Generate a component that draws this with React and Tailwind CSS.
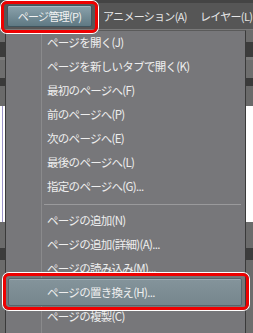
const groupA = [
  'ページを開く(J)',
  'ページを新しいタブで開く(K)',
  '最初のページへ(F)',
  '前のページへ(P)',
  '次のページへ(E)',
  '最後のページへ(L)',
  '指定のページへ(G)...',
];

const groupB = [
  'ページの追加(N)',
  'ページの追加(詳細)(A)...',
  'ページの読み込み(M)...',
  'ページの置き換え(H)...',
  'ページの複製(C)',
];

function MenuRow({ label, active }) {
  return (
    <div className="relative h-[24px] flex items-center">
      {active && (
        <div className="absolute left-[2px] right-[3px] top-[-3px] bottom-[-1px] rounded-[2px] border border-[#56666d] bg-gradient-to-b from-[#84949b] to-[#76868d] shadow-[inset_0_1px_0_#9aa9b0]" />
      )}
      <span className="relative pl-[41px] text-[11.5px] tracking-[-0.7px] text-[#eeeeee] whitespace-nowrap">
        {label}
      </span>
    </div>
  );
}

export default function App() {
  return (
    <div
      className="relative w-[253px] h-[333px] overflow-hidden bg-[#6d6d6d]"
      style={{ fontFamily: '"Noto Sans CJK JP", "Noto Sans", sans-serif' }}
    >
      {/* menu bar */}
      <div className="h-[30px] flex items-center bg-[#565656] border-t-[3px] border-[#444444] border-b border-b-[#7a7a7a] text-[11px] tracking-[-0.7px] whitespace-nowrap">
        <div className="shrink-0 ml-[7px] w-[85px] h-[22px] flex items-center justify-center rounded-[2px] border border-[#3f545d] bg-gradient-to-b from-[#8ba2ac] to-[#5f7983] shadow-[inset_0_1px_0_#a8bcc5] text-[#f2f2f2]">
          ページ管理(P)
        </div>
        <span className="shrink-0 ml-[11px] w-[97px] text-[#e6e6e6]">アニメーション(A)</span>
        <span className="shrink-0 text-[#e6e6e6]">レイヤー(L)</span>
      </div>

      {/* background under the menu */}
      <div className="flex flex-col">
        <div className="h-[12px] bg-[#6c6c6c]" />
        <div className="h-[15px] bg-[#3c3c3c]" />
        <div className="h-[3px] bg-[#7a7a7a]" />
        <div className="h-[18px] bg-[#6e6e6e]" />
        <div className="h-[8px] bg-[#3a3a3a]" />
        <div className="h-[20px] bg-[#6a6a6a]" />
        <div className="h-[116px] bg-white flex">
          <div className="ml-[2px] w-px bg-[#9a93c8]" />
        </div>
        <div className="h-[26px] bg-[#6b6b6b]" />
        <div className="h-[12px] bg-[#3c3c3c]" />
        <div className="h-[30px] bg-[#6b6b6b]" />
        <div className="flex-1 bg-white" />
      </div>

      {/* dropdown */}
      <div className="absolute left-[5px] top-[30px] w-[241px] h-[310px] bg-[#77777a] border-x border-[#3a3a3a] border-t border-t-[#5a5a5a]">
        <div className="absolute left-[35px] top-0 bottom-0 w-px bg-[#8a8a8c]" />
        <div className="flex flex-col">
          {groupA.map((l) => (
            <MenuRow key={l} label={l} />
          ))}
          <div className="h-[10px] flex items-center pl-[38px] pr-[4px]">
            <div className="h-px w-full bg-[#9a9a9c]" />
          </div>
          {groupB.map((l) => (
            <MenuRow key={l} label={l} active={l.startsWith('ページの置き換え')} />
          ))}
        </div>
      </div>

      {/* callouts */}
      <div className="absolute left-[1px] top-[1px] w-[97px] h-[32px] rounded-[6px] border-[3px] border-[#ee0000] shadow-[0_0_0_1px_#ffffff]" />
      <div className="absolute left-[3px] top-[273px] w-[246px] h-[37px] rounded-[6px] border-[3px] border-[#ee0000] shadow-[0_0_0_1px_#ffffff]" />
    </div>
  );
}
